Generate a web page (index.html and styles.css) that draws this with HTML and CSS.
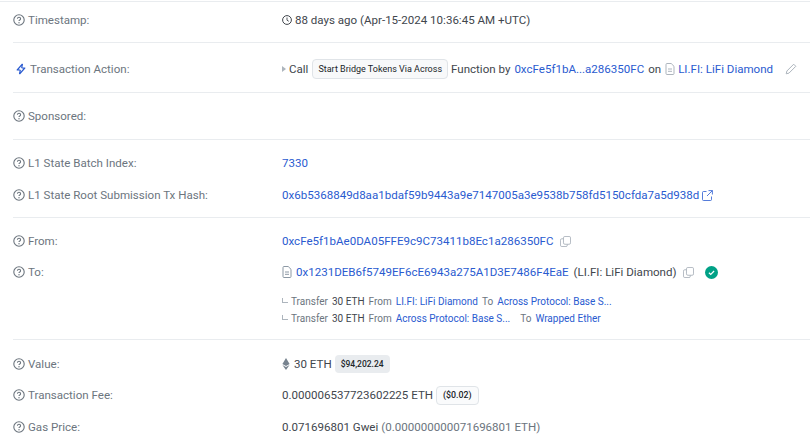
FILE: index.html
```html
<!DOCTYPE html>
<html lang="en">
<head>
<meta charset="utf-8">
<title>Transaction details</title>
<link rel="stylesheet" href="styles.css">
</head>
<body>
<svg class="defs" width="0" height="0" aria-hidden="true">
  <symbol id="q" viewBox="0 0 12 12"><circle cx="6" cy="6" r="5.2" fill="none" stroke="currentColor" stroke-width="1.100"/><path d="M4.400 4.800C4.500 3.800 5.200 3.300 6 3.300c.9 0 1.600.6 1.600 1.400 0 1.200-1.600 1.300-1.600 2.300" fill="none" stroke="currentColor" stroke-width="1.100"/><circle cx="6" cy="8.700" r=".7" fill="currentColor"/></symbol>
  <symbol id="doc" viewBox="0 0 10 12"><path d="M1 1.500A1 1 0 0 1 2 .5h4.200L9 3.300V10.500a1 1 0 0 1-1 1H2a1 1 0 0 1-1-1z" fill="none" stroke="currentColor"/><path d="M3 6h4M3 8.300h4" stroke="currentColor"/></symbol>
  <symbol id="copy" viewBox="0 0 12 12"><rect x="3.800" y=".5" width="7.700" height="8.500" rx="1.500" fill="none" stroke="currentColor"/><path d="M3.800 3H2a1.500 1.500 0 0 0-1.500 1.500V10A1.500 1.500 0 0 0 2 11.500h4.500A1.500 1.500 0 0 0 8 10V9" fill="none" stroke="currentColor"/></symbol>
</svg>
<main class="card">
  <section class="sec sec-a">
    <div class="row">
      <div class="label"><svg class="q"><use href="#q"/></svg>Timestamp:</div>
      <div class="val"><svg class="clock" viewBox="0 0 10 10"><circle cx="5" cy="5" r="4.400" fill="none" stroke="currentColor"/><path d="M5 2.500V5.200L6.800 6.300" fill="none" stroke="currentColor" stroke-width=".9"/></svg>88 days ago (Apr-15-2024 10:36:45 AM +UTC)</div>
    </div>
  </section>
  <section class="sec sec-b">
    <div class="row">
      <div class="label label-action"><svg class="bolt" viewBox="0 0 12 12"><path d="M7.500.8 2.200 7h3.100M4.500 11.200 9.800 5H6.700M7.500.8 6.700 5M4.500 11.200 5.300 7" fill="none" stroke="currentColor" stroke-width="1.200" stroke-linejoin="round"/></svg>Transaction Action:</div>
      <div class="val">
        <span class="tri"></span><span>Call</span>
        <span class="chip">Start Bridge Tokens Via Across</span>
        <span>Function by</span>
        <a class="link sp-l">0xcFe5f1bA...a286350FC</a>
        <span class="sp-l">on</span>
        <svg class="doc doc-a"><use href="#doc"/></svg><a class="link">LI.FI: LiFi Diamond</a>
        <svg class="pen" viewBox="0 0 12 12"><path d="M8.700 1.200 10.800 3.300 4 10.100 1.200 10.800 1.900 8z" fill="none" stroke="currentColor"/></svg>
      </div>
    </div>
  </section>
  <section class="sec sec-c">
    <div class="row">
      <div class="label"><svg class="q"><use href="#q"/></svg>Sponsored:</div>
    </div>
  </section>
  <section class="sec sec-d">
    <div class="row short">
      <div class="label"><svg class="q"><use href="#q"/></svg>L1 State Batch Index:</div>
      <div class="val"><a class="link">7330</a></div>
    </div>
    <div class="row short">
      <div class="label"><svg class="q"><use href="#q"/></svg>L1 State Root Submission Tx Hash:</div>
      <div class="val"><a class="link">0x6b5368849d8aa1bdaf59b9443a9e7147005a3e9538b758fd5150cfda7a5d938d</a><svg class="ext" viewBox="0 0 11 11"><path d="M4.500 1.500H1.500A1 1 0 0 0 .5 2.500v7a1 1 0 0 0 1 1h7a1 1 0 0 0 1-1v-3M6.500.6h3.900v3.900M10.400.6 5 6" fill="none" stroke="currentColor" stroke-width=".8"/></svg></div>
    </div>
  </section>
  <section class="sec sec-e">
    <div class="row short from">
      <div class="label"><svg class="q"><use href="#q"/></svg>From:</div>
      <div class="val"><a class="link">0xcFe5f1bAe0DA05FFE9c9C73411b8Ec1a286350FC</a><svg class="copy"><use href="#copy"/></svg></div>
    </div>
    <div class="row short to">
      <div class="label"><svg class="q"><use href="#q"/></svg>To:</div>
      <div class="val"><svg class="doc doc-b"><use href="#doc"/></svg><a class="link">0x1231DEB6f5749EF6cE6943a275A1D3E7486F4EaE</a><span class="sp-m">(LI.FI: LiFi Diamond)</span><svg class="copy"><use href="#copy"/></svg><svg class="ok" viewBox="0 0 12 12"><circle cx="6" cy="6" r="6" fill="#00a186"/><path d="M3.600 6.200 5.300 7.800 8.400 4.600" fill="none" stroke="#fff" stroke-width="1.100"/></svg></div>
    </div>
    <div class="transfers">
      <div class="tr"><span class="elbow"></span><span class="mut">Transfer</span><span class="dark">30 ETH</span><span class="mut">From</span><a class="link">LI.FI: LiFi Diamond</a><span class="mut">To</span><a class="link">Across Protocol: Base S...</a></div>
      <div class="tr"><span class="elbow"></span><span class="mut">Transfer</span><span class="dark">30 ETH</span><span class="mut">From</span><a class="link">Across Protocol: Base S...</a><span class="mut to-gap">To</span><a class="link">Wrapped Ether</a></div>
    </div>
  </section>
  <section class="sec sec-f">
    <div class="row short">
      <div class="label"><svg class="q"><use href="#q"/></svg>Value:</div>
      <div class="val"><svg class="eth" viewBox="0 0 8 12"><path d="M4 0 .4 6 4 8.100 7.600 6z" fill="currentColor"/><path d="M.4 7 4 12 7.600 7 4 9.100z" fill="currentColor"/></svg><span>30 ETH</span><span class="price">$94,202.24</span></div>
    </div>
    <div class="row short fee">
      <div class="label"><svg class="q"><use href="#q"/></svg>Transaction Fee:</div>
      <div class="val"><span>0.000006537723602225 ETH</span><span class="feebox">($0.02)</span></div>
    </div>
    <div class="row short gas">
      <div class="label"><svg class="q"><use href="#q"/></svg>Gas Price:</div>
      <div class="val"><span>0.071696801 Gwei</span><span class="mut sp-s">(0.000000000071696801 ETH)</span></div>
    </div>
  </section>
</main>
</body>
</html>
```
FILE: styles.css
```css
* { box-sizing: border-box; }
html, body { margin: 0; padding: 0; }
body {
  width: 810px;
  height: 446px;
  overflow: hidden;
  background: #fff;
  color: #41464d;
  font: 11.550px/16px Roboto, "Liberation Sans", sans-serif;
}
.defs { position: absolute; }
.card { padding-left: 13px; }
.sec { border-top: 1px solid #e9ecef; }
.sec:first-child { margin-top: 1px; margin-left: -13px; padding-left: 13px; }
.row { display: flex; align-items: center; height: 36px; }
.label {
  display: flex;
  align-items: center;
  width: 269px;
  flex: none;
  color: #6c757e;
}
.val { display: flex; align-items: center; white-space: nowrap; }
.q { width: 12px; height: 12px; margin-right: 3px; color: #6c757e; flex: none; }
.link { color: #2a5bd0; }
.mut { color: #6c757e; }
.dark { color: #41464d; }

.sec-a { height: 41px; }
.sec-b { height: 50px; padding-top: 8px; }
.sec-c { height: 47px; padding-top: 5px; }
.sec-d { height: 78px; padding-top: 11px; }
.sec-e { height: 122px; padding-top: 11px; }
.sec-f { padding-top: 12px; }
.short { height: 24px; }
.sec-d .short + .short { margin-top: 8px; }
.to { margin-top: 7px; }
.fee { margin-top: 7px; }
.gas { margin-top: 8px; }

.clock { width: 10px; height: 10px; margin-right: 3px; color: #41464d; }
.label-action { padding-left: 2px; }
.bolt { width: 12px; height: 12px; margin-right: 3px; color: #2a5bd0; }
.tri {
  width: 0; height: 0;
  margin-right: 3px;
  border-left: 4px solid #adb5bd;
  border-top: 3px solid transparent;
  border-bottom: 3px solid transparent;
}
.chip {
  margin: 0 3px 0 4px;
  padding: 0 5px;
  height: 20px;
  line-height: 18px;
  font-size: 9px;
  color: #212529;
  background: #f8f9fa;
  border: 1px solid #e0e4e8;
  border-radius: 4px;
}
.sp-l { margin-left: 4px; }
.sp-m { margin-left: 5px; }
.sp-s { margin-left: 3px; }
.doc { width: 10px; height: 12px; color: #adb5bd; flex: none; }
.doc-a { margin: 0 3px 0 4px; }
.doc-b { margin-right: 4px; color: #8c98a4; }
.pen { width: 12px; height: 12px; margin-left: 12px; color: #adb5bd; }
.ext { width: 11px; height: 11px; margin-left: 3px; color: #2a5bd0; }
.copy { width: 11px; height: 11px; margin-left: 6px; color: #adb5bd; }
.ok { width: 13px; height: 13px; margin-left: 11px; }
.transfers { margin: 9px 0 0 269px; font-size: 10px; line-height: 17px; }
.tr { display: flex; align-items: center; gap: 4px; white-space: nowrap; }
.elbow {
  width: 6px; height: 5px;
  margin: -3px -1px 0 0;
  border-left: 1px solid #adb5bd;
  border-bottom: 1px solid #adb5bd;
}
.to-gap { margin-left: 6px; }
.eth { width: 8px; height: 12px; margin-right: 4px; color: #77838f; }
.price {
  margin-left: 3px;
  padding: 0 6px;
  height: 18px;
  line-height: 18px;
  font-size: 8.500px;
  font-weight: 500;
  color: #212529;
  background: #e9ecef;
  border-radius: 4px;
}
.feebox {
  margin-left: 3px;
  padding: 0 6px;
  height: 19px;
  line-height: 17px;
  font-size: 8.800px;
  font-weight: 500;
  color: #212529;
  border: 1px solid #e0e4e8;
  background: #fafbfc;
  border-radius: 4px;
}
```
